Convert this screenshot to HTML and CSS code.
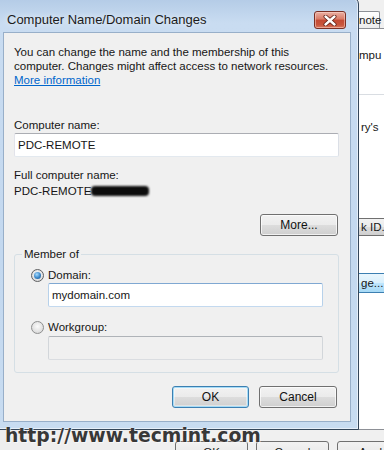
FILE: index.html
```html
<!DOCTYPE html>
<html>
<head>
<meta charset="utf-8">
<link rel="stylesheet" href="styles.css">
</head>
<body>
<div class="desktop">
  <div class="bgwin">
    <div class="bg-tabs"><div class="bg-tab">note</div></div>
    <div class="bg-panel">
      <div class="bg-text bg-t1">mpu</div>
      <div class="bg-sep"></div>
      <div class="bg-text bg-t2">ry's</div>
      <div class="bg-btn bg-btn-id">k ID...</div>
      <div class="bg-btn bg-btn-hover">ge...</div>
    </div>
    <div class="bg-footer">
      <div class="bg-fbtn">OK</div>
      <div class="bg-fbtn">Cancel</div>
      <div class="bg-fbtn">Apply</div>
    </div>
  </div>

  <div class="dialog">
    <div class="titlebar">
      <span class="title">Computer Name/Domain Changes</span>
      <span class="close">
        <svg width="14" height="11" viewBox="0 0 14 11">
          <path d="M2.5 1.5 L11.5 9.5 M11.5 1.5 L2.5 9.5" stroke="#5a1a10" stroke-width="4" stroke-linecap="round"/>
          <path d="M2.5 1.5 L11.5 9.5 M11.5 1.5 L2.5 9.5" stroke="#ffffff" stroke-width="2.4" stroke-linecap="round"/>
        </svg>
      </span>
    </div>
    <div class="client">
      <p class="intro">You can change the name and the membership of this<br>computer. Changes might affect access to network resources.<br><a class="link" href="#">More information</a></p>
      <div class="label label-cn">Computer name:</div>
      <div class="textbox">PDC-REMOTE</div>
      <div class="label label-full">Full computer name:</div>
      <div class="label fullname">PDC-REMOTE<span class="redact"></span></div>
      <div class="more-row"><button class="btn btn-more">More...</button></div>
      <fieldset class="group">
        <legend class="legend">Member of</legend>
        <div class="radio-row"><span class="radio on"><span class="dot"></span></span>Domain:</div>
        <div class="textbox domain">mydomain.com</div>
        <div class="radio-row radio-wg"><span class="radio"></span>Workgroup:</div>
        <div class="textbox disabled"></div>
      </fieldset>
      <div class="actions">
        <button class="btn btn-ok">OK</button>
        <button class="btn btn-cancel">Cancel</button>
      </div>
    </div>
  </div>

  <div class="watermark">http://www.tecmint.com</div>
</div>
</body>
</html>
```

FILE: styles.css
```css
* { box-sizing: border-box; }
html, body { margin: 0; padding: 0; }
body { width: 384px; height: 450px; overflow: hidden; background: #f0f0f0; }

.desktop {
  position: relative;
  width: 384px;
  height: 450px;
  overflow: hidden;
  font-family: "Liberation Sans", Arial, sans-serif;
  font-size: 11.5px;
  line-height: 14px;
  color: #161616;
  background: #eeeeee;
}

/* background window (partly hidden) */
.bgwin {
  position: absolute;
  left: 150px;
  top: 0;
  width: 260px;
  height: 470px;
  background: #f0f0f0;
  display: flex;
  flex-direction: column;
}
.bg-tabs {
  height: 28px;
  padding: 11px 0 0 200px;
  display: flex;
}
.bg-tab {
  width: 30px;
  height: 17px;
  border: 1px solid #8d9096;
  border-bottom: none;
  border-radius: 2px 2px 0 0;
  background: linear-gradient(#ffffff, #ececec);
  padding: 1px 0 0 8px;
}
.bg-panel {
  height: 402px;
  background: #ffffff;
  border: 1px solid #8d9096;
  display: flex;
  flex-direction: column;
  padding-left: 208px;
}
.bg-text { height: 14px; white-space: nowrap; }
.bg-t1 { margin-top: 19px; }
.bg-sep { margin-top: 32px; height: 1px; background: #d9dde2; margin-left: -10px; }
.bg-t2 { margin-top: 25px; padding-left: 2px; }
.bg-btn {
  width: 80px;
  margin-left: -8px;
  padding-left: 9px;
  border: 1px solid #707070;
  border-radius: 3px;
  white-space: nowrap;
}
.bg-btn-id {
  margin-top: 84px;
  height: 18px;
  padding-top: 1px;
  background: linear-gradient(#f2f2f2, #ebebeb 50%, #dddddd 50%, #cfcfcf);
}
.bg-btn-hover {
  margin-top: 37px;
  height: 20px;
  padding-top: 2px;
  border-color: #3c7fb1;
  background: linear-gradient(#eaf6fd, #d9f0fc 50%, #bee6fd 50%, #a7d9f5);
}
.bg-footer {
  flex: 1;
  background: #f0f0f0;
  display: flex;
  gap: 8px;
  padding: 11px 0 0 25px;
}
.bg-fbtn {
  width: 80px;
  height: 23px;
  border: 1px solid #707070;
  border-radius: 3px;
  background: linear-gradient(#f2f2f2, #ebebeb 50%, #dddddd 50%, #cfcfcf);
  text-align: center;
  padding-top: 3px;
}

/* dialog */
.dialog {
  position: absolute;
  left: -5px;
  top: -3px;
  width: 364px;
  height: 433px;
  border: 1px solid #34465a;
  border-radius: 7px 7px 0 0;
  padding: 0 7px 7px 7px;
  background: linear-gradient(#b3cbe6, #c9dcf1 25px, #c3d8ef 60%, #c8dcf1);
  box-shadow: inset 0 0 0 1px rgba(255,255,255,0.55);
}
.titlebar {
  height: 34px;
  display: flex;
  justify-content: space-between;
  align-items: flex-start;
}
.title {
  margin: 14px 0 0 4px;
  font-size: 13px;
  line-height: 16px;
  color: #1b1b1b;
  text-shadow: 0 0 6px rgba(255,255,255,0.9);
}
.close {
  margin: 13px 5px 0 0;
  width: 32px;
  height: 18px;
  border: 1px solid #7a2f24;
  border-radius: 3px;
  background: linear-gradient(#eab0a4, #d97a66 45%, #c44a33 50%, #c8553c 80%, #d9785f);
  box-shadow: inset 0 0 0 1px rgba(255,220,210,0.5);
  display: flex;
  align-items: center;
  justify-content: center;
}

.client {
  height: 390px;
  background: #f0f0f0;
  border: 1px solid #98afc9;
  padding: 12px 11px 0 10px;
}
.intro { margin: 0; }
.link { color: #0066cc; text-decoration: underline; }

.label { height: 14px; white-space: nowrap; }
.label-cn { margin-top: 31px; }
.label-full { margin-top: 11px; }
.fullname { margin-top: 2px; display: flex; align-items: center; }
.redact {
  display: inline-block;
  width: 58px;
  height: 10px;
  margin-left: 0;
  background: #0d0d0d;
  border-radius: 4px;
  filter: blur(1.3px);
}

.textbox {
  margin-top: 1px;
  height: 24px;
  width: 325px;
  background: #ffffff;
  border: 1px solid #abadb3;
  border-color: #abadb3 #dbdfe6 #e3e9ef #e2e3ea;
  border-radius: 2px;
  padding: 4px 0 0 3px;
  white-space: nowrap;
}

.more-row { margin-top: 16px; display: flex; justify-content: flex-end; padding-right: 1px; }

.btn {
  font-family: inherit;
  font-size: 12px;
  line-height: 14px;
  color: #111;
  height: 22px;
  border: 1px solid #707070;
  border-radius: 3px;
  background: linear-gradient(#f2f2f2, #ebebeb 50%, #dddddd 50%, #cfcfcf);
  box-shadow: inset 0 0 0 1px rgba(255,255,255,0.7);
  padding: 0;
  margin: 0;
}
.btn-more { width: 78px; }

.group {
  margin: 11px 0 0 0;
  width: 325px;
  height: 126px;
  border: 1px solid #d5dfe5;
  border-radius: 3px;
  padding: 7px 15px 0 16px;
  min-inline-size: 0;
}
.legend {
  padding: 0 2px;
  margin-left: -9px;
  line-height: 14px;
}
.radio-row {
  height: 14px;
  display: flex;
  align-items: center;
  gap: 4px;
  white-space: nowrap;
}
.radio-wg { margin-top: 13px; }
.radio {
  width: 13px;
  height: 13px;
  border-radius: 50%;
  border: 1px solid #8e8f8f;
  background: radial-gradient(circle at 50% 40%, #fbfbfb, #e2e2e2 60%, #cfcfcf);
  display: flex;
  align-items: center;
  justify-content: center;
}
.radio.on { border-color: #5f6062; }
.dot {
  width: 7px;
  height: 7px;
  border-radius: 50%;
  background: radial-gradient(circle at 40% 35%, #a6dcff, #3a86c8 55%, #1d4f80);
}
.domain {
  margin: 1px 0 0 17px;
  width: 275px;
  border-color: #7fa8d2 #b7d1ea #c3d9ef #b7d1ea;
}
.disabled {
  margin: 2px 0 0 17px;
  width: 275px;
  background: #f0f0f0;
  border-color: #afb3b8 #d2d6da #dadde1 #d2d6da;
}

.actions {
  margin-top: 13px;
  display: flex;
  justify-content: flex-end;
  gap: 10px;
  padding-right: 2px;
}
.btn-ok {
  width: 77px;
  border-color: #3c7fb1;
  box-shadow: inset 0 0 0 1px #a6dcf7, inset 0 0 0 2px rgba(255,255,255,0.4);
}
.btn-cancel { width: 78px; }

.watermark {
  position: absolute;
  left: 5px;
  top: 426px;
  font-family: "DejaVu Sans", Verdana, sans-serif;
  font-weight: bold;
  font-size: 18.8px;
  line-height: 20px;
  color: #383838;
  text-shadow: 0 0 1px #ffffff, 1px 1px 0 rgba(255,255,255,0.6);
  white-space: nowrap;
}
```
